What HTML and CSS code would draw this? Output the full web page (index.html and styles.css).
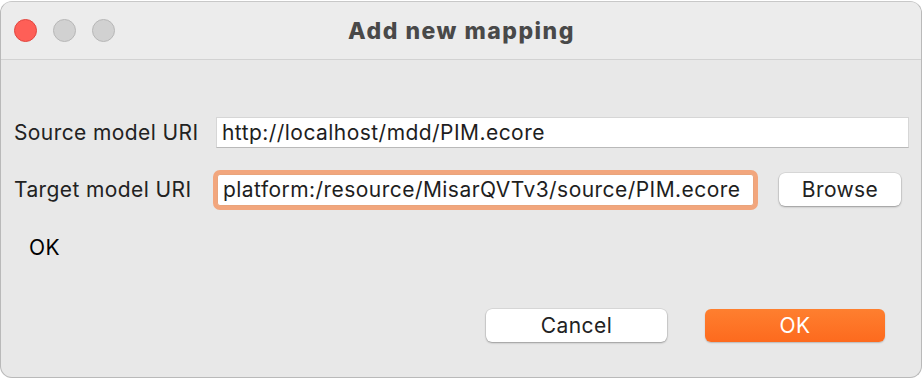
FILE: index.html
```html
<!DOCTYPE html>
<html lang="en">
<head>
  <meta charset="UTF-8">
  <meta name="viewport" content="width=device-width, initial-scale=1.0">
  <title>Add new mapping</title>
  <link rel="stylesheet" href="styles.css">
</head>
<body>
  <div class="window">
    <div class="titlebar">
      <div class="lights">
        <span class="light close"></span>
        <span class="light"></span>
        <span class="light"></span>
      </div>
      <div class="title">Add new mapping</div>
      <div></div>
    </div>
    <div class="content">
      <div class="row">
        <label class="label" for="source-uri">Source model URI</label>
        <input type="text" id="source-uri" class="field field-wide" value="http://localhost/mdd/PIM.ecore" readonly>
      </div>
      <div class="row row-target">
        <label class="label" for="target-uri">Target model URI</label>
        <input type="text" id="target-uri" class="field field-focus" value="platform:/resource/MisarQVTv3/source/PIM.ecore" readonly>
        <button class="btn btn-browse">Browse</button>
      </div>
      <div class="status">OK</div>
      <div class="actions">
        <button class="btn btn-action">Cancel</button>
        <button class="btn btn-action btn-primary">OK</button>
      </div>
    </div>
  </div>
</body>
</html>
```

FILE: styles.css
```css
body {
  margin: 0;
  padding: 1px 0 0 0;
  background-color: #fff;
  font-family: Inter, "Liberation Sans", sans-serif;
}

.window {
  width: 920px;
  height: 375px;
  background-color: #e8e8e8;
  border: 1px solid #b9b9b9;
  border-top-color: #c8c8c8;
  border-radius: 12px;
  overflow: hidden;
}

.titlebar {
  height: 57px;
  background-color: #ececec;
  border-bottom: 1px solid #d2d2d2;
  display: grid;
  grid-template-columns: 1fr auto 1fr;
  align-items: center;
}

.lights {
  display: flex;
  gap: 16px;
  padding-left: 13px;
}

.light {
  width: 23px;
  height: 23px;
  border-radius: 50%;
  background-color: #d1d1d1;
  border: 1px solid #b7b7b7;
  box-sizing: border-box;
}

.light.close {
  background-color: #fe5f57;
  border-color: #e2463f;
}

.title {
  font-size: 23px;
  font-weight: 800;
  color: #494949;
  padding-left: 1px;
  letter-spacing: 1.5px;
}

.content {
  padding: 57px 12px 0 13px;
}

.row {
  display: flex;
  align-items: center;
  height: 31px;
}

.row-target {
  margin-top: 25px;
  height: 33px;
}

.label {
  width: 202px;
  font-size: 21px;
  letter-spacing: 0.4px;
  color: #222;
}

.field {
  height: 32px;
  box-sizing: border-box;
  border: 1px solid #d6d6d6;
  border-bottom-color: #b9b9b9;
  background-color: #fff;
  padding: 0 5px;
  font-family: Inter, "Liberation Sans", sans-serif;
  font-size: 21px;
  letter-spacing: 0.45px;
  color: #1e1e1e;
  outline: none;
}

.field-wide {
  flex: 1;
  height: 31px;
}

.field-focus {
  width: 537px;
  margin-left: 1px;
  border-color: #e9a47c;
  box-shadow: 0 0 0 4px #f2a67d;
  border-radius: 3px;
}

.btn {
  font-family: Inter, "Liberation Sans", sans-serif;
  font-size: 21px;
  letter-spacing: 0.4px;
  color: #222;
  background-color: #fff;
  border: none;
  border-radius: 6px;
  box-shadow: 0 0 0 0.5px rgba(0, 0, 0, 0.12), 0 1px 2px rgba(0, 0, 0, 0.3);
  height: 33px;
  padding: 0;
}

.btn-browse {
  width: 122px;
  margin-left: 25px;
}

.status {
  margin-top: 30px;
  padding-left: 15px;
  font-size: 21px;
  letter-spacing: 0.4px;
  color: #000;
  height: 24px;
  line-height: 24px;
}

.actions {
  display: flex;
  justify-content: flex-end;
  gap: 38px;
  margin-top: 49px;
  padding-right: 24px;
}

.btn-action {
  width: 181px;
}

.btn-primary {
  width: 180px;
  color: #fff;
  background: linear-gradient(#fe7f2f, #fd6a1e);
  box-shadow: 0 1px 1.5px rgba(0, 0, 0, 0.2);
}
```
